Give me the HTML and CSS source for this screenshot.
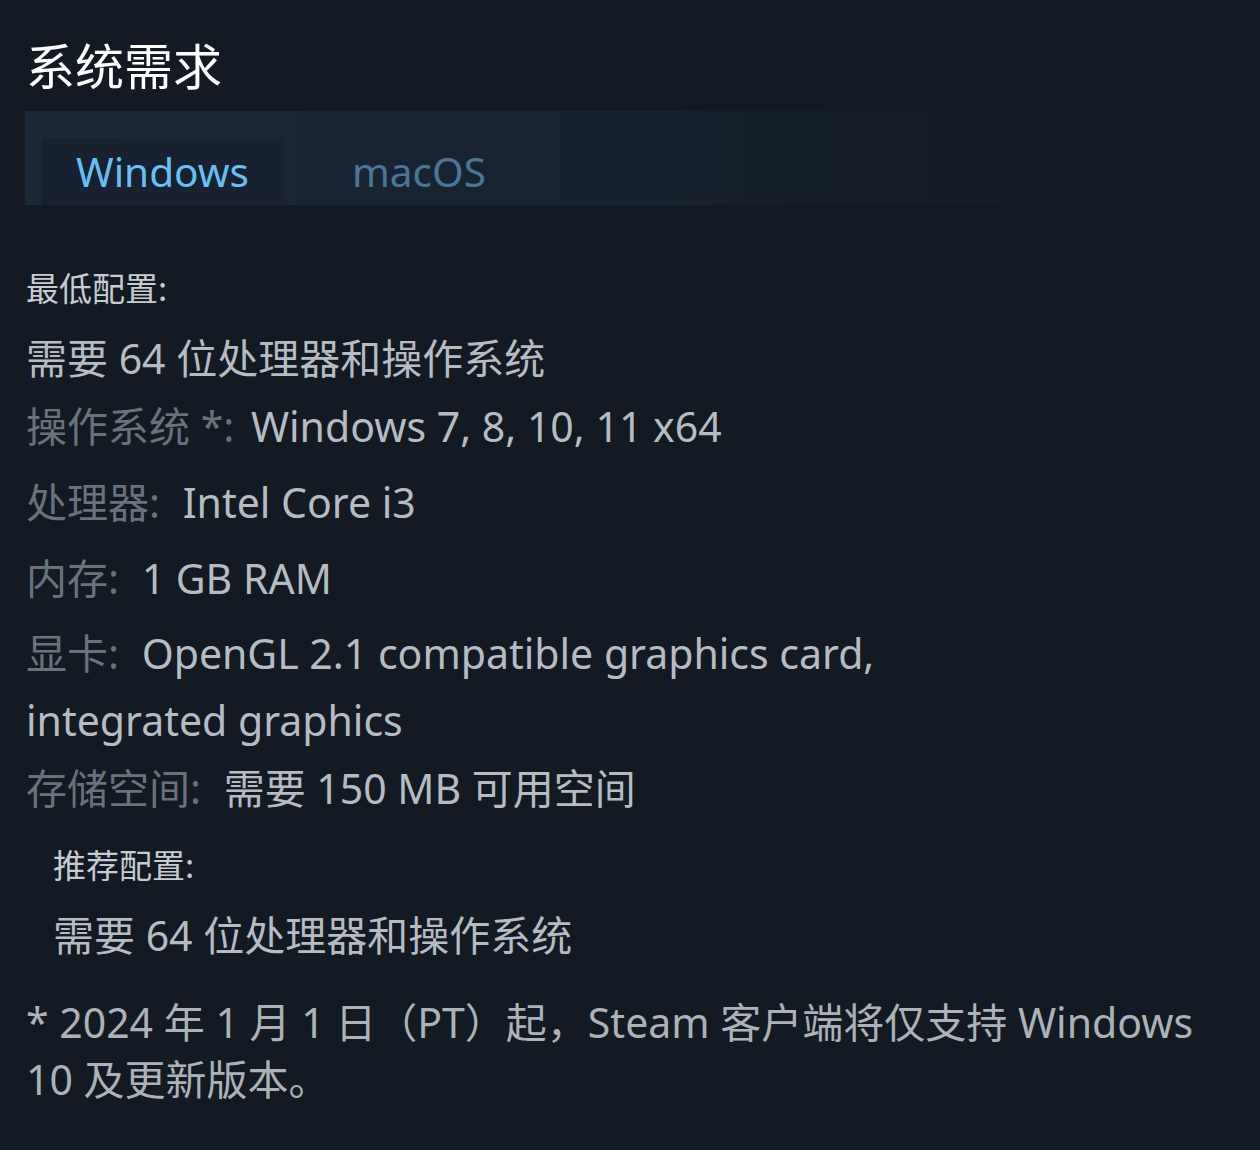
FILE: index.html
```html
<!DOCTYPE html>
<html lang="zh-CN">
<head>
<meta charset="utf-8">
<title>系统需求</title>
<link rel="stylesheet" href="styles.css">
</head>
<body>
<div class="page">
  <h2 class="title">系统需求</h2>
  <div class="tabs">
    <div class="tab active">Windows</div>
    <div class="tab">macOS</div>
  </div>
  <div class="reqs">
    <div class="block">
      <div class="heading">最低配置:</div>
      <ul class="list">
        <li class="note">需要 64 位处理器和操作系统</li>
        <li><span class="label label-os">操作系统 *:</span> Windows 7, 8, 10, 11 x64</li>
        <li><span class="label">处理器:</span> Intel Core i3</li>
        <li><span class="label">内存:</span> 1 GB RAM</li>
        <li class="wrap"><span class="label">显卡:</span> OpenGL 2.1 compatible graphics card, integrated graphics</li>
        <li><span class="label">存储空间:</span> 需要 150 MB 可用空间</li>
      </ul>
    </div>
    <div class="block indent">
      <div class="heading">推荐配置:</div>
      <ul class="list">
        <li class="note">需要 64 位处理器和操作系统</li>
      </ul>
    </div>
    <p class="footnote">* 2024 年 1 月 1 日（PT）起，Steam 客户端将仅支持 Windows 10 及更新版本。</p>
  </div>
</div>
</body>
</html>
```
FILE: styles.css
```css
html, body {
  margin: 0;
  padding: 0;
  background: #131a23;
}
body {
  font-family: "Noto Sans", "Noto Sans CJK SC", sans-serif;
  color: #acb2b8;
}
.page {
  padding: 0 20px 0 26px;
}
.title {
  margin: 0;
  padding-top: 32px;
  font-size: 49px;
  font-weight: 400;
  line-height: 64px;
  color: #ffffff;
  font-family: "Noto Sans CJK SC", sans-serif;
}
.tabs {
  margin: 15px 0 0 -1px;
  height: 94px;
  display: flex;
  align-items: flex-end;
  padding-left: 17px;
  background: linear-gradient(to right, #1a2735 0%, #172230 50%, #141b26 85%, rgba(19,26,35,0) 100%);
}
.tab {
  height: 67px;
  display: flex;
  align-items: center;
  font-size: 40.5px;
  color: #4b7698;
}
.tab.active {
  width: 241px;
  box-sizing: border-box;
  justify-content: center;
  background: #172130;
  color: #66c0f4;
}
.tab + .tab {
  padding-left: 69px;
}
.reqs {
  padding-top: 62px;
}
.heading {
  font-size: 33px;
  line-height: 40px;
  color: #c6ccd2;
  font-family: "Noto Sans CJK SC", sans-serif;
}
.list {
  list-style: none;
  margin: 0;
  padding: 0;
}
.list li {
  font-size: 41px;
  line-height: 68px;
  margin-bottom: 8px;
  color: #b6bcc2;
}
.list li.note {
  margin-top: 17px;
  margin-bottom: 0;
}
.label {
  color: #6a727c;
  margin-right: 12px;
}
.label-os {
  margin-right: 6px;
}
.list li.wrap {
  width: 890px;
  margin-bottom: 0;
  line-height: 67px;
}
.block.indent {
  padding-left: 27px;
  margin-top: 22px;
}
.footnote {
  margin: 25px 0 0;
  font-size: 41px;
  line-height: 57px;
  color: #acb2b8;
}
```
